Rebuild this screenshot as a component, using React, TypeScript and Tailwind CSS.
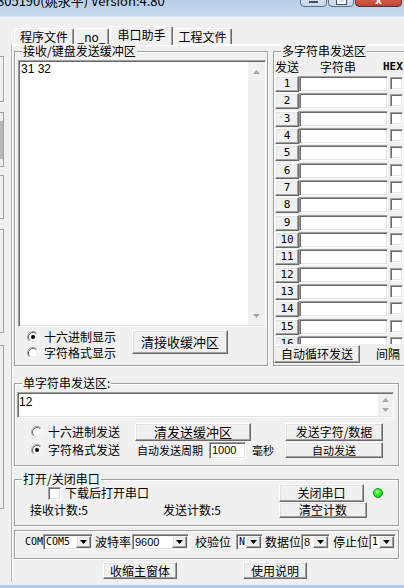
import React from "react";

const RAISED =
  "bg-[#f0f0f0] border border-t-white border-l-white border-r-[#696969] border-b-[#696969] shadow-[inset_-1px_-1px_0_#a0a0a0,inset_1px_1px_0_#e3e3e3]";
const SUNKEN =
  "bg-white border border-t-[#a0a0a0] border-l-[#a0a0a0] border-r-white border-b-white shadow-[inset_1px_1px_0_#696969,inset_-1px_-1px_0_#e3e3e3]";

function Btn({ className = "", children }: { className?: string; children?: React.ReactNode }) {
  return (
    <div className={`${RAISED} flex items-center justify-center whitespace-nowrap shrink-0 leading-[14px] ${className}`}>
      {children}
    </div>
  );
}

function Radio({ checked }: { checked?: boolean }) {
  return (
    <svg width="12" height="12" viewBox="0 0 12 12" className="shrink-0">
      <circle cx="6" cy="6" r="4" fill="#fff" />
      <path d="M2.11 9.89A5.5 5.5 0 0 1 9.89 2.11" fill="none" stroke="#a0a0a0" />
      <path d="M9.89 2.11A5.5 5.5 0 0 1 2.11 9.89" fill="none" stroke="#fff" />
      <path d="M2.82 9.18A4.5 4.5 0 0 1 9.18 2.82" fill="none" stroke="#696969" />
      <path d="M9.18 2.82A4.5 4.5 0 0 1 2.82 9.18" fill="none" stroke="#e3e3e3" />
      {checked && <circle cx="6" cy="6" r="2" fill="#000" />}
    </svg>
  );
}

function Group({ label, className = "", children }: { label?: string; className?: string; children?: React.ReactNode }) {
  return (
    <div className={`relative shrink-0 border border-[#a0a0a0] shadow-[inset_1px_1px_0_#fff,1px_1px_0_#fff] ${className}`}>
      {label && (
        <span className="absolute -top-[8px] left-[7px] px-[1px] bg-[#f0f0f0] leading-[14px] whitespace-nowrap">{label}</span>
      )}
      {children}
    </div>
  );
}

function VScroll({ className = "", up = "", down = "" }: { className?: string; up?: string; down?: string }) {
  return (
    <div className={`flex flex-col justify-between items-center bg-[#f0f0f0] shrink-0 ${className}`}>
      <svg width="7" height="4" viewBox="0 0 7 4" className={up}>
        <path d="M0 4L3.5 0L7 4Z" fill="#a8a8a8" />
      </svg>
      <svg width="7" height="4" viewBox="0 0 7 4" className={down}>
        <path d="M0 0H7L3.5 4Z" fill="#a8a8a8" />
      </svg>
    </div>
  );
}

function Combo({ className = "", text, mono }: { className?: string; text: string; mono?: boolean }) {
  return (
    <div className={`${SUNKEN} flex items-stretch h-[16px] shrink-0 ${className}`}>
      <span
        className={`flex-1 pl-[2px] leading-[14px] overflow-hidden ${
          mono ? "font-['DejaVu_Sans_Mono',monospace] text-[10px]" : "font-['Liberation_Sans',sans-serif] text-[11px]"
        }`}
      >
        {text}
      </span>
      <div className={`${RAISED} w-[15px] flex items-center justify-center m-[1px] shrink-0`}>
        <svg width="7" height="4" viewBox="0 0 7 4">
          <path d="M0 0H7L3.5 4Z" fill="#000" />
        </svg>
      </div>
    </div>
  );
}

function Tab({ className = "", children }: { className?: string; children?: React.ReactNode }) {
  return (
    <div
      className={`h-[16px] shrink-0 border-t border-l border-r border-t-white border-l-white border-r-[#696969] shadow-[inset_-1px_0_0_#a0a0a0] rounded-t-[2px] flex items-center justify-center leading-[14px] ${className}`}
    >
      {children}
    </div>
  );
}

export default function App() {
  const rows = Array.from({ length: 16 }, (_, i) => i + 1);
  return (
    <div className="w-[404px] h-[588px] overflow-hidden bg-[#f0f0f0] flex flex-col text-[12px] leading-[14px] text-black font-['Noto_Sans_CJK_SC',sans-serif]">
      {/* title bar */}
      <div className="h-[17px] shrink-0 flex items-end justify-between bg-gradient-to-b from-[#b9cfe9] to-[#c5d7ed] border-b border-b-[#dce6f2] overflow-hidden">
        <span className="text-[13px] leading-[16px] mb-[7px] -ml-[3px] whitespace-nowrap">805190(姚永平) Version:4.80</span>
        <div className="flex items-end mb-[9px] mr-[2px]">
          <div className="w-[27px] h-[19px] rounded-b-[4px] border border-[#5f6e84] bg-gradient-to-b from-[#e4edf8] to-[#c7d7ea] flex items-end justify-center">
            <div className="w-[9px] h-[2px] mb-[3px] bg-white border border-[#44526a]" />
          </div>
          <div className="w-[26px] h-[19px] ml-[1px] rounded-b-[4px] border border-[#5f6e84] bg-gradient-to-b from-[#e4edf8] to-[#c7d7ea] flex items-end justify-center">
            <div className="w-[9px] h-[7px] mb-[2px] border-2 border-white outline outline-1 outline-[#44526a]" />
          </div>
          <div className="w-[47px] h-[19px] ml-[1px] rounded-b-[4px] border border-[#6b2b25] bg-gradient-to-b from-[#e08478] to-[#c7402f] flex items-end justify-center">
            <span className="text-white text-[11px] leading-[11px] font-bold font-['DejaVu_Sans',sans-serif]">x</span>
          </div>
        </div>
      </div>

      {/* client */}
      <div className="flex-1 flex min-h-0">
        {/* left strip fragments */}
        <div className="w-[11px] shrink-0 flex flex-col">
          <div className="mt-[39px] h-[46px] w-[4px] border border-l-0 border-[#a0a0a0] shadow-[1px_1px_0_#fff]" />
          <div className="mt-[10px] h-[55px] w-[4px] border border-l-0 border-[#a0a0a0] flex flex-col">
            <div className="mt-[8px] h-[38px] w-[3px] bg-[#b8b8b8]" />
          </div>
          <div className="mt-[8px] h-[44px] w-[4px] border border-l-0 border-[#a0a0a0]" />
          <div className="mt-[10px] h-[104px] w-[4px] border border-l-0 border-[#a0a0a0]" />
          <div className="mt-[12px] h-[164px] w-[4px] border border-l-0 border-[#a0a0a0]" />
        </div>

        {/* tab control */}
        <div className="flex-1 flex flex-col pt-[8px] pb-[3px] min-w-0">
          <div className="h-[19px] flex items-end pl-[3px] shrink-0">
            <Tab className="w-[60px]">程序文件</Tab>
            <Tab className="w-[35px]">_no_</Tab>
            <div className="w-[63px] h-[19px] ml-[1px] -mb-[1px] relative z-10 bg-[#f0f0f0] shrink-0 border-t border-l border-r border-t-white border-l-white border-r-[#696969] shadow-[inset_-1px_0_0_#a0a0a0] rounded-t-[2px] flex items-center justify-center pb-[3px] leading-[14px]">
              串口助手
            </div>
            <Tab className="w-[59px]">工程文件</Tab>
          </div>

          <div className="flex-1 flex flex-col border-t border-l border-t-white border-l-[#b4b4b4] shadow-[inset_1px_1px_0_#fff] pl-[2px]">
            {/* upper */}
            <div className="mt-[6px] flex shrink-0">
              <Group label="接收/键盘发送缓冲区" className="w-[254px] h-[315px]">
                <div className={`${SUNKEN} ml-[3px] mt-[8px] w-[248px] h-[267px] flex`}>
                  <div className="flex-1 pl-[2px] pt-[1px] font-['Liberation_Sans',sans-serif] text-[12px] leading-[14px]">31 32 </div>
                  <VScroll className="w-[17px] my-[1px]" up="mt-[8px]" down="mb-[7px]" />
                </div>
                <div className="mt-[2px] flex items-start">
                  <div className="ml-[12px] w-[105px] flex flex-col">
                    <div className="h-[16px] flex items-center gap-[5px]">
                      <Radio checked />
                      <span>十六进制显示</span>
                    </div>
                    <div className="h-[16px] flex items-center gap-[5px]">
                      <Radio />
                      <span>字符格式显示</span>
                    </div>
                  </div>
                  <Btn className="mt-[1px] w-[96px] h-[24px] text-[13px]">清接收缓冲区</Btn>
                </div>
              </Group>

              <Group label="多字符串发送区" className="ml-[5px] w-[133px] h-[315px]">
                <div className="w-full h-full overflow-hidden flex flex-col">
                  <div className="mt-[7px] h-[16px] flex items-center shrink-0">
                    <span className="ml-[1px] w-[45px]">发送</span>
                    <span className="w-[63px]">字符串</span>
                    <span className="font-['DejaVu_Sans_Mono',monospace] font-bold text-[11px]">HEX</span>
                  </div>
                  <div className="mt-[1px] h-[268px] overflow-hidden flex flex-col shrink-0">
                    {rows.map((n) => (
                      <div key={n} className="h-[17.33px] shrink-0 flex items-start">
                        <Btn className="ml-[1px] w-[24px] h-[16px] font-['DejaVu_Sans_Mono',monospace] text-[11px]">{n}</Btn>
                        <div className={`${SUNKEN} w-[89px] h-[16px] shrink-0`} />
                        <div className={`${SUNKEN} ml-[2px] mt-[1px] w-[13px] h-[13px] shrink-0`} />
                      </div>
                    ))}
                  </div>
                  <div className="mt-[1px] h-[18px] flex items-center shrink-0">
                    <Btn className="w-[86px] h-[18px]">自动循环发送</Btn>
                    <span className="ml-[16px] whitespace-nowrap">间隔</span>
                  </div>
                </div>
              </Group>
            </div>

            {/* single string send */}
            <Group label="单字符串发送区:" className="mt-[17px] w-[385px] h-[83px]">
              <div className={`${SUNKEN} ml-[2px] mt-[8px] w-[377px] h-[26px] flex`}>
                <div className="flex-1 pl-[1px] pt-[2px] font-['Liberation_Sans',sans-serif] text-[12px] leading-[14px]">12</div>
                <VScroll className="w-[15px] my-[1px]" up="mt-[4px]" down="mb-[4px]" />
              </div>
              <div className="mt-[5px] flex items-center h-[18px]">
                <div className="ml-[16px] w-[104px] flex items-center gap-[5px] shrink-0">
                  <Radio />
                  <span>十六进制发送</span>
                </div>
                <Btn className="w-[116px] h-[18px] text-[13px]">清发送缓冲区</Btn>
                <Btn className="ml-[34px] w-[98px] h-[18px]">发送字符/数据</Btn>
              </div>
              <div className="flex items-center h-[18px]">
                <div className="ml-[16px] w-[104px] flex items-center gap-[5px] shrink-0">
                  <Radio checked />
                  <span>字符格式发送</span>
                </div>
                <span className="ml-[2px] w-[72px] text-[11px] shrink-0">自动发送周期</span>
                <div className={`${SUNKEN} w-[37px] h-[17px] shrink-0 pl-[2px] font-['Liberation_Sans',sans-serif] text-[11px] leading-[15px]`}>1000</div>
                <span className="ml-[6px] w-[22px] text-[11px] shrink-0">毫秒</span>
                <Btn className="ml-[11px] w-[98px] h-[16px] text-[11px]">自动发送</Btn>
              </div>
            </Group>

            {/* open/close port */}
            <Group label="打开/关闭串口" className="mt-[13px] w-[385px] h-[47px]">
              <div className="mt-[4px] flex items-start">
                <div className="w-[264px] shrink-0">
                  <div className="h-[18px] flex items-center">
                    <div className={`${SUNKEN} ml-[33px] w-[13px] h-[13px] shrink-0`} />
                    <span className="ml-[4px]">下载后打开串口</span>
                  </div>
                  <div className="h-[16px] flex items-center">
                    <span className="ml-[15px] w-[133px] shrink-0">接收计数:5</span>
                    <span>发送计数:5</span>
                  </div>
                </div>
                <div className="flex flex-col w-[88px] shrink-0">
                  <Btn className="w-[85px] h-[18px]">关闭串口</Btn>
                  <Btn className="w-[88px] h-[16px]">清空计数</Btn>
                </div>
                <div className="ml-[6px] mt-[4px] w-[10px] h-[10px] rounded-full border border-[#1a8a1a] bg-[radial-gradient(circle_at_40%_35%,#c8ffc8_0%,#22ff22_40%,#00c000_100%)] shrink-0" />
              </div>
            </Group>

            {/* port settings */}
            <Group className="mt-[4px] w-[385px] h-[29px]">
              <div className="mt-[3px] flex items-center h-[16px]">
                <span className="ml-[10px] w-[18px] font-['DejaVu_Sans_Mono',monospace] text-[10px] shrink-0">COM</span>
                <Combo className="w-[50px]" text="COM5" mono />
                <span className="ml-[2px] w-[36px] shrink-0">波特率</span>
                <Combo className="ml-[1px] w-[57px]" text="9600" />
                <span className="ml-[6px] w-[36px] shrink-0">校验位</span>
                <Combo className="ml-[5px] w-[27px]" text="N" mono />
                <span className="ml-[2px] w-[36px] shrink-0">数据位</span>
                <Combo className="w-[29px]" text="8" />
                <span className="ml-[3px] w-[36px] shrink-0">停止位</span>
                <Combo className="w-[27px]" text="1" mono />
              </div>
            </Group>

            {/* bottom buttons */}
            <div className="mt-[3px] flex pl-[89px] shrink-0">
              <Btn className="w-[74px] h-[17px]">收缩主窗体</Btn>
              <Btn className="ml-[66px] w-[64px] h-[17px]">使用说明</Btn>
            </div>
          </div>
        </div>
      </div>

      {/* bottom frame */}
      <div className="h-[3px] shrink-0 bg-[#b3cbe8]" />
    </div>
  );
}
